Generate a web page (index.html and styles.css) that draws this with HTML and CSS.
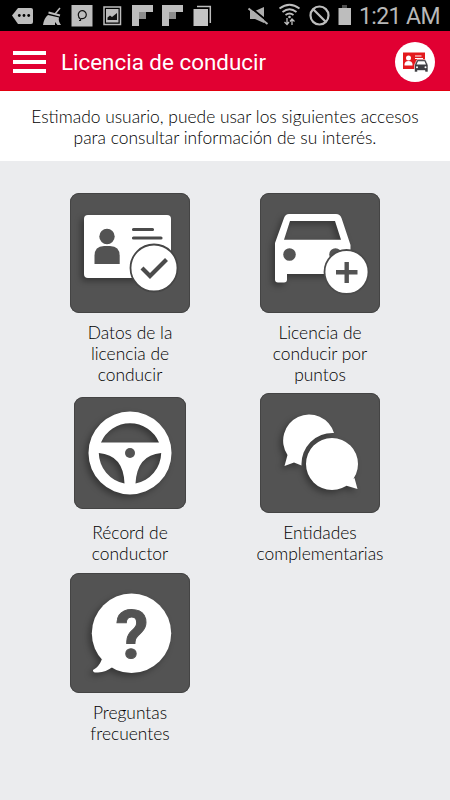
FILE: index.html
```html
<!DOCTYPE html>
<html lang="es">
<head>
    <meta charset="UTF-8">
    <meta name="viewport" content="width=device-width, initial-scale=1.0">
    <title>Licencia de conducir</title>
    <link rel="stylesheet" href="styles.css">
</head>
<body>
    <div class="status-bar">
        <svg class="status-left" width="225" height="31" viewBox="0 0 225 31">
            <!-- messages -->
            <path d="M12 15.5 L18 8 H31 Q33 8 33 10 V22 Q33 24 31 24 H18 Z" fill="#bdbdbd"/>
            <g fill="#000"><circle cx="19.3" cy="15.5" r="1.4"/><circle cx="24" cy="15.5" r="1.4"/><circle cx="28.700" cy="15.5" r="1.4"/></g>
            <!-- cleaner -->
            <path d="M43 25 Q44 18 48 15 L59 17.500 Q58 21 61 25 H57.500 L55 22 L55 25 Z" fill="#bdbdbd"/>
            <path d="M48.500 12.500 L60 15.500" stroke="#bdbdbd" stroke-width="2"/>
            <path d="M55 14 L60 8" stroke="#bdbdbd" stroke-width="1.500"/>
            <!-- p app -->
            <rect x="71.5" y="5" width="21" height="21.500" fill="#bdbdbd"/>
            <path d="M79 20.500 H80.500 V19 Q78.300 17.500 78.300 15 A4 4 0 1 1 82.500 18.700 L81 18.500" fill="none" stroke="#111" stroke-width="1.200"/>
            <!-- gallery -->
            <rect x="104" y="7" width="16.500" height="17.500" fill="none" stroke="#bdbdbd" stroke-width="1.500"/>
            <rect x="106" y="9" width="12.500" height="13.500" fill="#bdbdbd"/>
            <path d="M107.500 20 V17.500 L110 15.500 L112 17 L117 13 V20 Z" fill="#111"/>
            <!-- boards -->
            <g id="board">
                <path d="M132 5 H153 V12 H146 V19 H139 V26 H132 Z" fill="#bdbdbd"/>
                <path d="M139 12 H146 V19 H139 Z" fill="#8c8c8c"/>
            </g>
            <use href="#board" x="30"/>
            <!-- copies -->
            <path d="M197 6.500 H210.300 V23" fill="none" stroke="#bdbdbd" stroke-width="1.500"/>
            <rect x="193.500" y="9" width="14.500" height="17" fill="#c4c4c4"/>
        </svg>
        <div class="status-right">
            <svg width="107" height="31" viewBox="0 0 107 31">
                <!-- muted -->
                <path d="M3 11 H8 L17 7 V23 L8 19 H3 Z" fill="#adadad"/>
                <path d="M3 7 L22 22.500" stroke="#000" stroke-width="2"/>
                <path d="M1.500 8.500 L20.500 24" stroke="#adadad" stroke-width="2"/>
                <!-- wifi -->
                <g fill="none" stroke="#bdbdbd" stroke-width="1.800">
                    <path d="M32.500 8.500 Q42.500 1 52.500 8.500"/>
                    <path d="M35.500 12 Q42.500 6.500 49.500 12"/>
                    <path d="M38.500 15 Q42.500 12 46.500 15"/>
                </g>
                <circle cx="42.500" cy="17" r="1.300" fill="#bdbdbd"/>
                <path d="M40 18 V24 M37.500 22 L40 24.500 L42 22 M45 25 V20 M43 21.500 L45 19 L47.500 21.500" fill="none" stroke="#bdbdbd" stroke-width="1.300"/>
                <!-- blocked -->
                <circle cx="72.500" cy="15.500" r="9" fill="none" stroke="#bdbdbd" stroke-width="2.200"/>
                <path d="M66 9 L79 22" stroke="#bdbdbd" stroke-width="2.200"/>
                <!-- battery -->
                <rect x="95" y="5" width="5" height="3" fill="#4d4d4d"/>
                <rect x="91.500" y="8" width="12.500" height="17" fill="#bdbdbd"/>
            </svg>
            <span class="clock">1:21 AM</span>
        </div>
    </div>

    <header class="app-bar">
        <div class="menu">
            <span></span>
            <span></span>
            <span></span>
        </div>
        <h1>Licencia de conducir</h1>
        <div class="badge">
            <svg width="40" height="40" viewBox="0 0 40 40">
                <rect x="8" y="10.500" width="22" height="16.500" fill="#e3191c"/>
                <circle cx="13.500" cy="16" r="2.500" fill="#fff"/>
                <path d="M9.500 23.500 V22 Q10 19 13.500 19 Q17 19 17.500 22 V23.500 Z" fill="#fff"/>
                <path d="M20 14 H26.500 M20 16.500 H28" stroke="#fff" stroke-width="1.200"/>
                <path d="M19.500 30 V23 L22 17.700 H30.500 L33 23 V30 H30 V28.500 H22.500 V30 Z" fill="#3e3e42" stroke="#fff" stroke-width=".6"/>
                <path d="M23 19.300 H29.500 L31 22.500 H21.500 Z" fill="#fff"/>
                <circle cx="22" cy="25.200" r="1" fill="#fff"/>
                <circle cx="30.500" cy="25.200" r="1" fill="#fff"/>
            </svg>
        </div>
    </header>

    <p class="intro">Estimado usuario, puede usar los siguientes accesos para consultar información de su interés.</p>

    <main class="grid">
        <div class="item">
            <svg class="tile" viewBox="0 0 120 120">
                <g class="shadow">
                    <rect x="14" y="22" width="87" height="63" rx="4" fill="#fff"/>
                </g>
                <circle cx="37" cy="43.500" r="7.700" fill="#535353"/>
                <path d="M24.500 71 V63 Q24.500 53 34 53 H40 Q49.700 53 49.700 63 V71 Z" fill="#535353"/>
                <path d="M63.500 36.500 H82.500 M63.500 45 H91" stroke="#4b4b4b" stroke-width="3.200" stroke-linecap="round"/>
                <circle cx="84" cy="75" r="23.500" fill="#fff" stroke="#464646" stroke-width="1.800"/>
                <path d="M72 75 L80 83 L96.500 66.500" fill="none" stroke="#4b4b4b" stroke-width="4.200"/>
            </svg>
            <span>Datos de la licencia de conducir</span>
        </div>
        <div class="item">
            <svg class="tile" viewBox="0 0 120 120">
                <g class="shadow">
                    <path fill-rule="evenodd" fill="#fff" d="M29 21 H76 Q80 21 81.500 25 L90.500 52 V81 H27 V86.500 Q27 89.500 24 89.500 H18 Q15 89.500 15 86.500 V50 L24 25 Q25.500 21 29 21 Z M30 28 L24 46.700 H81 L75 28 Z"/>
                </g>
                <circle cx="29.500" cy="61.500" r="6.300" fill="#535353"/>
                <circle cx="75.500" cy="61.500" r="6.300" fill="#535353"/>
                <circle cx="86.500" cy="79" r="22" fill="#fff" stroke="#4b4b4b" stroke-width="1.800"/>
                <path d="M76 79.300 H97.500 M86.700 69 V90" stroke="#535353" stroke-width="4.400"/>
            </svg>
            <span>Licencia de conducir por puntos</span>
        </div>
        <div class="item">
            <svg class="tile tile-small" viewBox="0 0 112 112">
                <g class="shadow">
                    <path fill-rule="evenodd" fill="#fff" d="M56 14.500 A41.500 41.500 0 1 1 56 97.500 A41.500 41.500 0 1 1 56 14.500 Z
                        M27 45.500 H85 A31.500 31.500 0 0 0 27 45.500 Z
                        M24.800 56 A31.500 31.500 0 0 0 50.500 86.500 Q49.500 58 24.800 56 Z
                        M87.200 56 A31.500 31.500 0 0 1 61.500 86.500 Q63 58 87.200 56 Z"/>
                </g>
                <circle cx="56" cy="56" r="5" fill="#535353"/>
            </svg>
            <span>Récord de conductor</span>
        </div>
        <div class="item">
            <svg class="tile" viewBox="0 0 120 120">
                <g class="shadow">
                    <path fill="#fff" d="M74 40 A26 26 0 1 0 27.500 62 L24.500 73 L34 69.500 L41.500 72.500 A31 31 0 0 1 74 40 Z"/>
                    <path fill="#fff" d="M72 45 A26 26 0 1 1 72 97 A26 26 0 1 1 72 45 Z M94.500 85 L97.500 96 L84 92 Z"/>
                </g>
            </svg>
            <span>Entidades complementarias</span>
        </div>
        <div class="item">
            <svg class="tile" viewBox="0 0 120 120">
                <g class="shadow" fill="#fff">
                    <circle cx="61.500" cy="60.200" r="39.700"/>
                    <path d="M42.500 94 L32 86 Q29 94 23 97 Q22.500 100 28 99.500 Q36 99 42.500 94 Z"/>
                </g>
                <text class="question" x="62" y="84.500">?</text>
            </svg>
            <span>Preguntas frecuentes</span>
        </div>
    </main>
</body>
</html>
```
FILE: styles.css
```css
* {
    box-sizing: border-box;
}
body {
    margin: 0;
    height: 800px;
    overflow: hidden;
    background-color: #ebecee;
    color: #000;
    font-family: Lato, sans-serif;
}
svg {
    display: block;
}
.status-bar {
    display: flex;
    justify-content: space-between;
    height: 31px;
    background-color: #000;
}
.status-right {
    display: flex;
    width: 203px;
}
.clock {
    margin-left: 5px;
    font-family: Roboto, sans-serif;
    font-size: 23px;
    font-weight: 400;
    line-height: 34px;
    letter-spacing: -0.6px;
    white-space: nowrap;
    color: #b8b8b8;
}
.app-bar {
    display: flex;
    align-items: center;
    height: 60px;
    padding: 2px 15px 0 13px;
    background-color: #e10032;
    border-bottom: 1px solid #e2000f;
}
.menu {
    display: flex;
    flex-direction: column;
    gap: 5px;
    width: 33px;
}
.menu span {
    height: 4px;
    background-color: #fff;
}
.app-bar h1 {
    flex: 1;
    margin: 0 0 0 15px;
    font-family: Roboto, sans-serif;
    font-size: 22.4px;
    font-weight: 400;
    color: #fff;
}
.badge {
    width: 40px;
    height: 40px;
    border-radius: 50%;
    background-color: #fff;
}
.intro {
    height: 70px;
    margin: 0;
    padding: 15px 24px 0;
    background-color: #fff;
    font-size: 17.4px;
    font-weight: 300;
    line-height: 21px;
    text-align: center;
}
.grid {
    display: grid;
    grid-template-columns: 130px 130px;
    grid-template-rows: 200px 180px 180px;
    column-gap: 60px;
    padding: 32px 65px 0;
}
.item {
    display: flex;
    flex-direction: column;
    align-items: center;
    font-size: 17.4px;
    font-weight: 300;
    line-height: 21px;
    text-align: center;
}
.tile {
    width: 120px;
    height: 120px;
    margin-bottom: 9px;
    border-radius: 9px;
    background-color: #535353;
    box-shadow: inset 0 0 0 1px #444;
}
.tile-small {
    width: 112px;
    height: 112px;
    margin: 4px 0 13px;
}
.shadow {
    filter: drop-shadow(-3px 3px 3px rgba(0, 0, 0, 0.35));
}
.question {
    font-family: Roboto, sans-serif;
    font-size: 66px;
    font-weight: 700;
    text-anchor: middle;
    fill: #535353;
    stroke: #535353;
    stroke-width: 1px;
}
```
